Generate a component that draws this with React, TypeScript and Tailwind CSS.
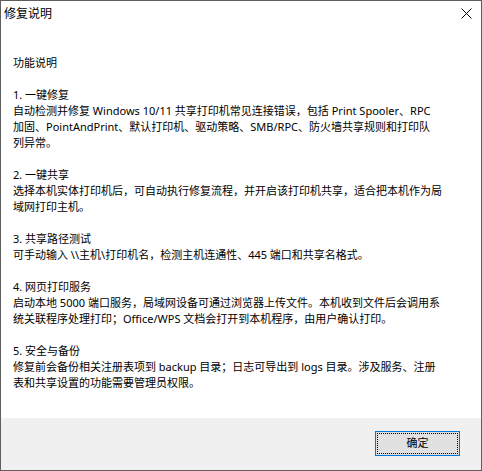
import React from "react";

// hard line breaks copied from the dialog so the wrap matches
const sections: string[][] = [
  ["功能说明"],
  [
    "1. 一键修复",
    "自动检测并修复 Windows 10/11 共享打印机常见连接错误，包括 Print Spooler、RPC",
    "加固、PointAndPrint、默认打印机、驱动策略、SMB/RPC、防火墙共享规则和打印队",
    "列异常。",
  ],
  [
    "2. 一键共享",
    "选择本机实体打印机后，可自动执行修复流程，并开启该打印机共享，适合把本机作为局",
    "域网打印主机。",
  ],
  ["3. 共享路径测试", "可手动输入 \\\\主机\\打印机名，检测主机连通性、445 端口和共享名格式。"],
  [
    "4. 网页打印服务",
    "启动本地 5000 端口服务，局域网设备可通过浏览器上传文件。本机收到文件后会调用系",
    "统关联程序处理打印；Office/WPS 文档会打开到本机程序，由用户确认打印。",
  ],
  [
    "5. 安全与备份",
    "修复前会备份相关注册表项到 backup 目录；日志可导出到 logs 目录。涉及服务、注册",
    "表和共享设置的功能需要管理员权限。",
  ],
];

const App: React.FC = () => {
  return (
    <div
      className="w-[482px] h-[471px] bg-white border border-[#5f5f5f] flex flex-col text-black"
      style={{ fontFamily: '"Noto Sans", "Noto Sans CJK SC", sans-serif' }}
    >
      {/* Title bar */}
      <div className="h-[25px] flex items-center justify-between pl-[3px] pr-[9px]">
        <span className="text-[12px] leading-4">修复说明</span>
        <svg width="11" height="11" viewBox="0 0 11 11" className="text-black">
          <path d="M0.5 0.5 L10.5 10.5 M10.5 0.5 L0.5 10.5" stroke="currentColor" strokeWidth="1" fill="none" />
        </svg>
      </div>

      {/* Body */}
      <div className="flex-1 pt-[29px] pl-[12px] text-[11px] leading-4 flex flex-col gap-4">
        {sections.map((lines, i) => (
          <div key={i}>
            {lines.map((line, j) => (
              <div key={j} className="whitespace-nowrap">
                {line}
              </div>
            ))}
          </div>
        ))}
      </div>

      {/* Footer */}
      <div className="h-[52px] bg-[#f0f0f0] flex justify-end items-start pt-[13px] pr-[21px]">
        <button className="w-[85px] h-[25px] bg-[#e1e1e1] border border-[#0078d7] p-[1px] text-[11px]">
          <div className="w-full h-full border border-dotted border-black flex items-center justify-center">
            确定
          </div>
        </button>
      </div>
    </div>
  );
};

export default App;
